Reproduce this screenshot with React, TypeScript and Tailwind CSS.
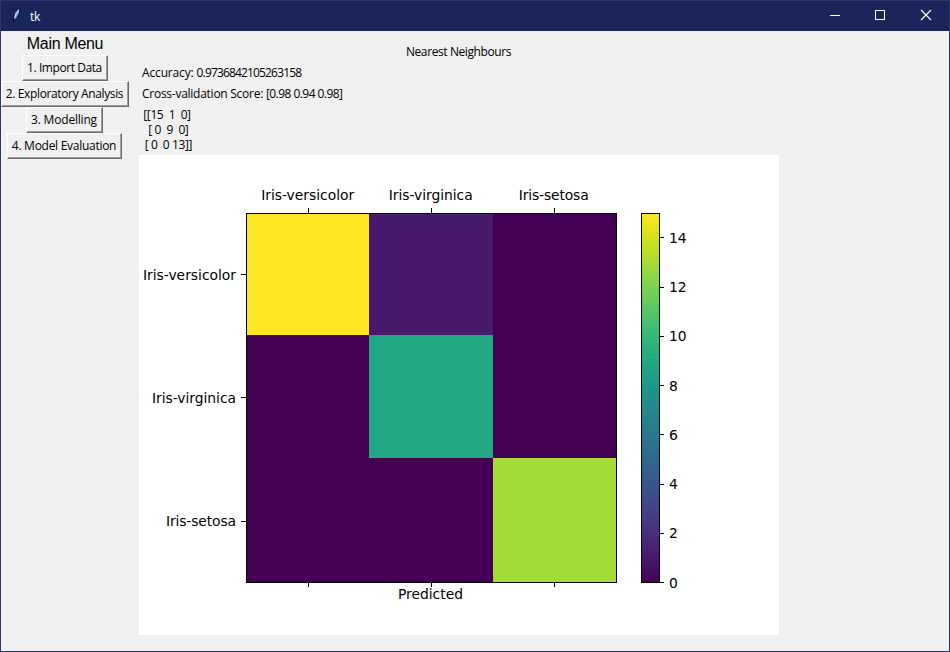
import React from "react";

const viridis = [
  "#440154", "#481467", "#482576", "#453781", "#404688", "#39558c", "#33638d", "#2d718e", "#287d8e", "#238a8d",
  "#1f968b", "#20a386", "#29af7f", "#3dbc74", "#56c667", "#75d054", "#95d840", "#bade28", "#dde318", "#fde725",
];

const cells = [
  ["#fde725", "#481a6c", "#440154"],
  ["#440154", "#22a884", "#440154"],
  ["#440154", "#440154", "#a5db36"],
];
const xs = [107, 230, 354, 478];
const ys = [58, 180, 303, 428];
const names = [
  { label: "Iris-versicolor", width: 93 },
  { label: "Iris-virginica", width: 84 },
  { label: "Iris-setosa", width: 70 },
];
const tickX = [169.5, 292.5, 415.5];
const tickY = [119.5, 242.5, 366.5];
const labelY = [125, 248, 371];

// value, tick position, label baseline
const barTicks: [number, number, number][] = [
  [14, 82.5, 88], [12, 132.5, 137], [10, 181.5, 186], [8, 230.5, 236],
  [6, 279.5, 285], [4, 329.5, 334], [2, 378.5, 383], [0, 427.5, 433],
];

function ConfusionMatrix() {
  return (
    <svg width="640" height="480" className="block bg-white font-['DejaVu_Sans',sans-serif] text-[13.89px]">
      <defs>
        <linearGradient id="viridis" x1="0" y1="1" x2="0" y2="0">
          {viridis.map((c, i) => (
            <stop key={i} offset={i / (viridis.length - 1)} stopColor={c} />
          ))}
        </linearGradient>
      </defs>
      <g shapeRendering="crispEdges">
        {cells.map((row, r) =>
          row.map((c, k) => (
            <rect key={`${r}-${k}`} x={xs[k]} y={ys[r]} width={xs[k + 1] - xs[k]} height={ys[r + 1] - ys[r]} fill={c} />
          )),
        )}
        <g stroke="#000" fill="none">
          <rect x="107.5" y="58.5" width="370" height="369" />
          {tickX.map((x) => (
            <path key={x} d={`M${x} 53V58M${x} 428V432`} />
          ))}
          {tickY.map((y) => (
            <path key={y} d={`M102 ${y}H107`} />
          ))}
          <rect x="502.5" y="58.5" width="18" height="369" fill="url(#viridis)" />
          {barTicks.map(([n, y]) => (
            <path key={n} d={`M521 ${y}H525`} />
          ))}
        </g>
      </g>
      {names.map((n, i) => (
        <text key={n.label} x={tickX[i] - 0.8} y="45" textAnchor="middle" textLength={n.width}>{n.label}</text>
      ))}
      {names.map((n, i) => (
        <text key={n.label} x="97" y={labelY[i]} textAnchor="end" textLength={n.width}>{n.label}</text>
      ))}
      <text x="291.5" y="444" textAnchor="middle" textLength="65">Predicted</text>
      {barTicks.map(([n, , baseline]) => (
        <text key={n} x="530" y={baseline}>{n}</text>
      ))}
    </svg>
  );
}

function MenuButton({ width, spacing, children }: { width: string; spacing: string; children: React.ReactNode }) {
  return (
    <button className={`${width} ${spacing} box-border flex h-[26px] items-center justify-center whitespace-nowrap border border-t-white border-l-white border-r-[#696969] border-b-[#696969] bg-[#f0f0f0] pr-px pb-px shadow-[inset_-1px_-1px_0_#a0a0a0]`}>
      {children}
    </button>
  );
}

export default function App() {
  return (
    <div className="flex h-[652px] w-[950px] flex-col overflow-hidden border border-[#2c3868] bg-[#f0f0f0] font-['Open_Sans','Noto_Sans',sans-serif] text-[12px] leading-[15px] text-black">
      <header className="flex h-[30px] shrink-0 items-center bg-[#1b2559] text-white">
        <svg width="12" height="18" viewBox="0 0 12 18" className="ml-[9px]">
          <path d="M3.5 15.5L2.7 10.5L5 5L9.5 1.2L10.3 2L9.6 7L7.2 11L4.3 13Z" fill="#07101f" />
          <path d="M4 11.5L5 6L9.2 1.8L9 6L6.7 10.5L4.5 12.5Z" fill="#6aa5d8" />
          <path d="M4.8 10.5L6.2 6.5L8.7 2.8" stroke="#d9eefb" fill="none" />
          <path d="M3.5 16L4.6 12" stroke="#07101f" fill="none" />
        </svg>
        <span className="ml-2 flex-1 tracking-[-0.2px]">tk</span>
        <svg width="120" height="30" viewBox="0 0 120 30" fill="none" stroke="#fff" shapeRendering="crispEdges">
          <path d="M1 14.5H11" />
          <rect x="46.5" y="9.5" width="9" height="9" />
          <path d="M92 9L102 19M102 9L92 19" shapeRendering="auto" strokeWidth="1.2" />
        </svg>
      </header>
      <main className="flex min-h-0 flex-1">
        <nav className="flex w-[128px] shrink-0 flex-col items-center">
          <h1 className="flex h-6 items-center font-['Liberation_Sans',Arial,sans-serif] text-[16px] tracking-[-0.3px]">Main Menu</h1>
          <MenuButton width="w-[86px]" spacing="tracking-[-0.43px]">1. Import Data</MenuButton>
          <MenuButton width="w-[128px]" spacing="tracking-[-0.37px]">2. Exploratory Analysis</MenuButton>
          <MenuButton width="w-[77px] mr-px" spacing="tracking-[-0.2px]">3. Modelling</MenuButton>
          <MenuButton width="w-[115px] mr-px" spacing="tracking-[-0.28px]">4. Model Evaluation</MenuButton>
        </nav>
        <section className="ml-[10px] w-[640px] shrink-0 whitespace-pre">
          <h2 className="mt-[13px] pr-px text-center tracking-[-0.4px]">Nearest Neighbours</h2>
          <p className="mt-[6px] pl-[3px]">
            <span className="tracking-[-0.15px]">Accuracy: </span>
            <span className="tracking-[-0.84px]">0.9736842105263158</span>
          </p>
          <p className="mt-[6px] pl-[3px]">
            <span className="tracking-[-0.26px]">Cross-validation Score: </span>
            <span className="tracking-[-0.55px]">[0.98 0.94 0.98]</span>
          </p>
          <div className="mt-[6px] mb-[3px] w-[56px] text-center tracking-[-0.4px]">
            <p>{"[[15  1  0]"}</p>
            <p>{" [ 0  9  0]"}</p>
            <p>{" [ 0  0 13]]"}</p>
          </div>
          <ConfusionMatrix />
        </section>
      </main>
    </div>
  );
}
